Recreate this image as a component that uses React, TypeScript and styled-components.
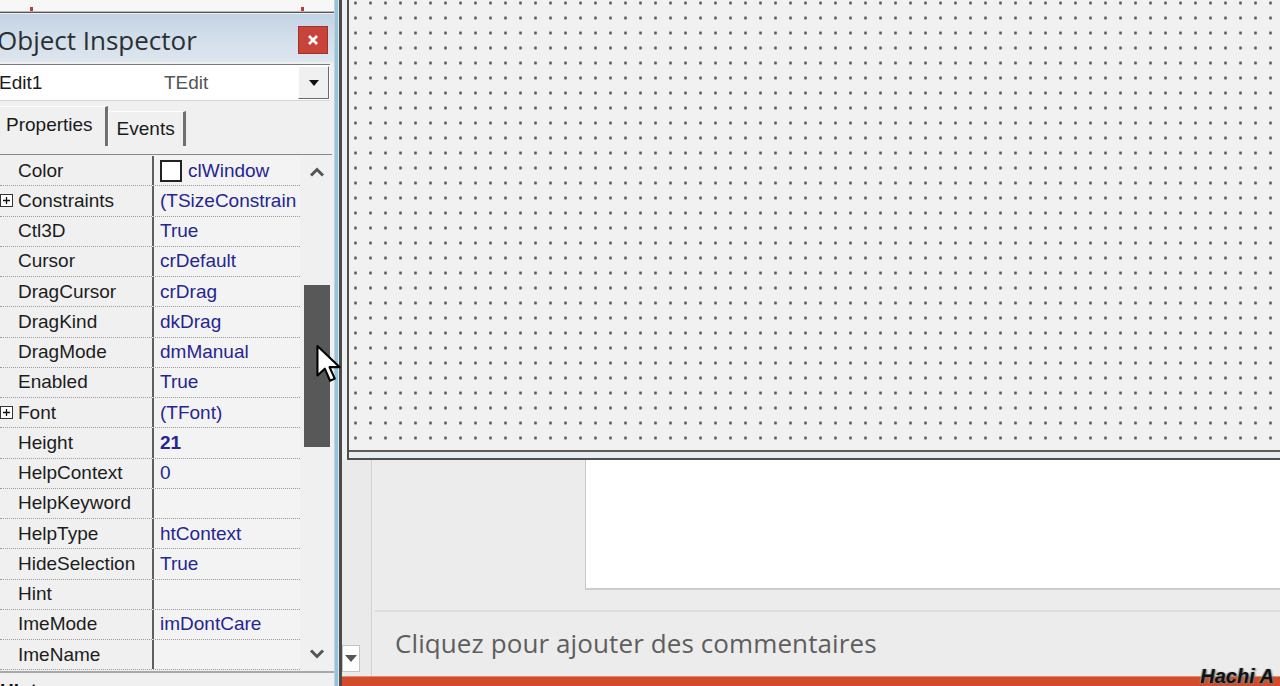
import React from "react";
import styled, { createGlobalStyle } from "styled-components";

const Global = createGlobalStyle`
  html, body { margin: 0; padding: 0; background: #f0f0f0; overflow: hidden; }
  #root { width: 1280px; height: 686px; }
`;

const Screen = styled.div`
  position: relative;
  width: 1280px;
  height: 686px;
  overflow: hidden;
  display: grid;
  grid-template-columns: 334px 8px 1fr;
  font-family: "Liberation Sans", Arial, sans-serif;
`;

/* ---------- Left: Object Inspector ---------- */
const Inspector = styled.div`
  display: flex;
  flex-direction: column;
  background: #f0f0f0;
  overflow: hidden;
  min-height: 0;
`;

const TopStrip = styled.div`
  height: 11px;
  flex: none;
  background: #f7f7f7;
  border-bottom: 1px solid #b8b8b8;
  box-shadow: 0 1px 0 #555;
  display: flex;
  align-items: flex-end;
  padding: 0 0 0 30px;
  gap: 268px;
`;

const Tick = styled.span`
  width: 3px;
  height: 4px;
  background: #c23a2e;
`;

const TitleBar = styled.div`
  height: 48px;
  flex: none;
  margin-top: 2px;
  box-sizing: border-box;
  padding: 4px 6px 0 0;
  display: flex;
  align-items: center;
  justify-content: space-between;
  background: linear-gradient(180deg, #c3d3e4 0%, #d3dfeb 55%, #dee6ee 100%);
`;

const TitleText = styled.span`
  font-family: "Open Sans", "Noto Sans", sans-serif;
  font-size: 26px;
  color: #2b2f33;
  margin-left: -3px;
`;

const CloseBtn = styled.div`
  width: 30px;
  height: 28px;
  background: #c8443b;
  border: 1px solid #a0322b;
  box-sizing: border-box;
  display: flex;
  align-items: center;
  justify-content: center;
`;

const Combo = styled.div`
  height: 37px;
  flex: none;
  margin: 2px 4px 0 0;
  background: #fff;
  border-top: 1px solid #7a7a7a;
  border-bottom: 1px solid #d6d6d6;
  box-sizing: border-box;
  display: flex;
  align-items: center;
  font-size: 19px;
`;

const ComboName = styled.span`
  width: 165px;
  color: #1b1b1b;
  margin-left: -1px;
`;

const ComboType = styled.span`
  flex: 1;
  color: #555;
`;

const ComboButton = styled.div`
  width: 31px;
  height: 33px;
  margin-right: 1px;
  background: #f0f0f0;
  border: 1px solid #fff;
  border-right-color: #6a6a6a;
  border-bottom-color: #6a6a6a;
  box-sizing: border-box;
  display: flex;
  align-items: center;
  justify-content: center;
`;

const Tabs = styled.div`
  height: 53px;
  flex: none;
  display: flex;
  align-items: flex-end;
  padding-bottom: 8px;
  box-sizing: border-box;
`;

const Tab = styled.div<{ $active?: boolean }>`
  height: ${(p) => (p.$active ? 40 : 35)}px;
  box-sizing: border-box;
  padding: 0 ${(p) => (p.$active ? 12 : 8)}px 0 ${(p) => (p.$active ? 6 : 8)}px;
  display: flex;
  align-items: center;
  font-size: 19px;
  color: #1a1a1a;
  border-top: 1px solid #fff;
  border-left: ${(p) => (p.$active ? "0" : "1px solid #fff")};
  border-right: 3px solid #707070;
  padding-bottom: ${(p) => (p.$active ? 4 : 0)}px;
`;

const GridWrap = styled.div`
  height: 516px;
  flex: none;
  display: flex;
  border-top: 1px solid #888;
  margin-right: 2px;
`;

const PropTable = styled.div`
  width: 300px;
  display: flex;
  flex-direction: column;
  padding-top: 1px;
`;

const Row = styled.div`
  height: 30.25px;
  box-sizing: border-box;
  display: grid;
  grid-template-columns: 154px 1fr;
  border-bottom: 1px dotted #9c9c9c;
  font-size: 19px;
`;

const NameCell = styled.div`
  display: flex;
  align-items: center;
  border-right: 2px solid #5e5e5e;
  color: #1c1c1c;
  white-space: nowrap;
  overflow: hidden;
`;

const Expander = styled.span`
  width: 18px;
  flex: none;
  display: flex;
  align-items: center;
`;

const ValueCell = styled.div<{ $bold?: boolean }>`
  display: flex;
  align-items: center;
  gap: 6px;
  padding-left: 6px;
  color: #262690;
  font-weight: ${(p) => (p.$bold ? 700 : 400)};
  white-space: nowrap;
  overflow: hidden;
  background: #f3f3f3;
`;

const Swatch = styled.span`
  width: 22px;
  height: 22px;
  flex: none;
  background: #fff;
  border: 2px solid #222;
  box-sizing: border-box;
`;

const ScrollBar = styled.div`
  width: 30px;
  margin-left: 2px;
  display: flex;
  flex-direction: column;
  background: #f0f0f0;
`;

const ArrowBox = styled.div`
  height: 34px;
  flex: none;
  display: flex;
  align-items: center;
  justify-content: center;
`;

const Track = styled.div`
  flex: 1;
  display: flex;
  flex-direction: column;
  align-items: center;
`;

const Thumb = styled.div`
  width: 26px;
  background: #585858;
`;

const HintBar = styled.div`
  flex: 1;
  border-top: 2px solid #a8a8a8;
  padding: 7px 0 0 0;
  font-size: 19px;
  color: #111;
  font-weight: 700;
`;

/* ---------- Edge between panels ---------- */
const Edge = styled.div`
  background: linear-gradient(
    90deg,
    #cfcfcf 0,
    #cfcfcf 1px,
    #8ec4df 1px,
    #8ec4df 4px,
    #e6e6e6 4px,
    #e6e6e6 5px,
    #4a4a4a 5px,
    #4a4a4a 8px
  );
`;

/* ---------- Right: form designer + PowerPoint ---------- */
const Workspace = styled.div`
  display: grid;
  grid-template-rows: 460px 1fr 10px;
  background: #ececec;
  min-width: 0;
`;

const FormZone = styled.div`
  padding-left: 5px;
  background: #eef0f2;
`;

const FormOuter = styled.div`
  height: 100%;
  box-sizing: border-box;
  border-left: 2px solid #4f4f4f;
  border-bottom: 2px solid #4f4f4f;
  padding-bottom: 6px;
  background: #e8ecf1;
`;

const Canvas = styled.div`
  height: 100%;
  box-sizing: border-box;
  border-bottom: 2px solid #5b5b5b;
  background-color: #f1f1f1;
  background-image: radial-gradient(circle, #5c5c5c 0, #5c5c5c 1.2px, transparent 1.7px);
  background-size: 15px 15px;
  background-position: -1px -4.5px;
`;

const SlideZone = styled.div`
  display: grid;
  grid-template-columns: 30px 1fr;
  min-height: 0;
`;

const ThumbStrip = styled.div`
  border-right: 1px solid #d2d2d2;
  display: flex;
  flex-direction: column;
  justify-content: flex-end;
  padding-bottom: 4px;
  background: #eaeaea;
`;

const MiniDrop = styled.div`
  width: 18px;
  height: 27px;
  background: #fff;
  border: 1px solid #c4c4c4;
  box-sizing: border-box;
  display: flex;
  align-items: center;
  justify-content: center;
`;

const SlideMain = styled.div`
  display: flex;
  flex-direction: column;
`;

const SlideRow = styled.div`
  height: 130px;
  flex: none;
  display: flex;
  padding-left: 213px;
`;

const Slide = styled.div`
  flex: 1;
  background: #fff;
  border-left: 1px solid #c8c8c8;
  border-bottom: 2px solid #cdcdcd;
`;

const Notes = styled.div`
  margin: 20px 0 0 3px;
  flex: 1;
  border-top: 2px solid #dddddd;
  display: flex;
  align-items: center;
  padding-left: 20px;
  padding-bottom: 2px;
  font-family: "Open Sans", "Noto Sans", sans-serif;
  font-size: 26px;
  letter-spacing: 0.1px;
  color: #5e5e5e;
`;

const StatusBar = styled.div`
  background: #d24b2a;
  border-top: 1px solid #e98a6f;
`;

/* ---------- overlays ---------- */
const Pointer = styled.svg`
  position: absolute;
  left: 315px;
  top: 344px;
`;

const Watermark = styled.span`
  position: absolute;
  right: 6px;
  bottom: -2px;
  font-family: "Liberation Sans", Arial, sans-serif;
  font-style: italic;
  font-weight: 700;
  font-size: 20px;
  color: #111;
  text-shadow: 1px 1px 2px #777, -1px 0 1px #999;
`;

const PlusIcon = () => (
  <svg width="13" height="13" viewBox="0 0 13 13">
    <rect x="0.5" y="0.5" width="12" height="12" fill="#fff" stroke="#333" />
    <path d="M3 6.5h7M6.5 3v7" stroke="#111" strokeWidth="1.3" />
  </svg>
);

const Chevron = ({ up }: { up?: boolean }) => (
  <svg width="16" height="10" viewBox="0 0 16 10">
    <path
      d={up ? "M2 8.5 L8 2.5 L14 8.5" : "M2 1.5 L8 7.5 L14 1.5"}
      fill="none"
      stroke="#555"
      strokeWidth="3"
    />
  </svg>
);

type Prop = { name: string; value?: string; expand?: boolean; swatch?: boolean; bold?: boolean };

const props: Prop[] = [
  { name: "Color", value: "clWindow", swatch: true },
  { name: "Constraints", value: "(TSizeConstrain", expand: true },
  { name: "Ctl3D", value: "True" },
  { name: "Cursor", value: "crDefault" },
  { name: "DragCursor", value: "crDrag" },
  { name: "DragKind", value: "dkDrag" },
  { name: "DragMode", value: "dmManual" },
  { name: "Enabled", value: "True" },
  { name: "Font", value: "(TFont)", expand: true },
  { name: "Height", value: "21", bold: true },
  { name: "HelpContext", value: "0" },
  { name: "HelpKeyword" },
  { name: "HelpType", value: "htContext" },
  { name: "HideSelection", value: "True" },
  { name: "Hint" },
  { name: "ImeMode", value: "imDontCare" },
  { name: "ImeName" },
];

const thumbTop = 96;
const thumbHeight = 162;

export default function App() {
  return (
    <>
      <Global />
      <Screen>
        <Inspector>
          <TopStrip>
            <Tick />
            <Tick />
          </TopStrip>
          <TitleBar>
            <TitleText>Object Inspector</TitleText>
            <CloseBtn>
              <svg width="12" height="12" viewBox="0 0 12 12">
                <path d="M2 2L10 10M10 2L2 10" stroke="#fff" strokeWidth="2.6" />
              </svg>
            </CloseBtn>
          </TitleBar>
          <Combo>
            <ComboName>Edit1</ComboName>
            <ComboType>TEdit</ComboType>
            <ComboButton>
              <svg width="10" height="6" viewBox="0 0 10 6">
                <path d="M0 0H10L5 6Z" fill="#111" />
              </svg>
            </ComboButton>
          </Combo>
          <Tabs>
            <Tab $active>Properties</Tab>
            <Tab>Events</Tab>
          </Tabs>
          <GridWrap>
            <PropTable>
              {props.map((p) => (
                <Row key={p.name}>
                  <NameCell>
                    <Expander>{p.expand ? <PlusIcon /> : null}</Expander>
                    {p.name}
                  </NameCell>
                  <ValueCell $bold={p.bold}>
                    {p.swatch ? <Swatch /> : null}
                    {p.value ?? ""}
                  </ValueCell>
                </Row>
              ))}
            </PropTable>
            <ScrollBar>
              <ArrowBox>
                <Chevron up />
              </ArrowBox>
              <Track>
                <Thumb style={{ marginTop: thumbTop, height: thumbHeight }} />
              </Track>
              <ArrowBox>
                <Chevron />
              </ArrowBox>
            </ScrollBar>
          </GridWrap>
          <HintBar>Hint</HintBar>
        </Inspector>
        <Edge />
        <Workspace>
          <FormZone>
            <FormOuter>
              <Canvas />
            </FormOuter>
          </FormZone>
          <SlideZone>
            <ThumbStrip>
              <MiniDrop>
                <svg width="12" height="7" viewBox="0 0 12 7">
                  <path d="M0 0H12L6 7Z" fill="#555" />
                </svg>
              </MiniDrop>
            </ThumbStrip>
            <SlideMain>
              <SlideRow>
                <Slide />
              </SlideRow>
              <Notes>Cliquez pour ajouter des commentaires</Notes>
            </SlideMain>
          </SlideZone>
          <StatusBar />
        </Workspace>
        <Pointer width="28" height="42" viewBox="0 0 26 40">
          <path
            d="M2 2 L2 30 L9 23.5 L14 35 L18.5 33 L13.5 22 L23 22 Z"
            fill="#fff"
            stroke="#000"
            strokeWidth="2"
            strokeLinejoin="round"
          />
        </Pointer>
        <Watermark>Hachi A</Watermark>
      </Screen>
    </>
  );
}
